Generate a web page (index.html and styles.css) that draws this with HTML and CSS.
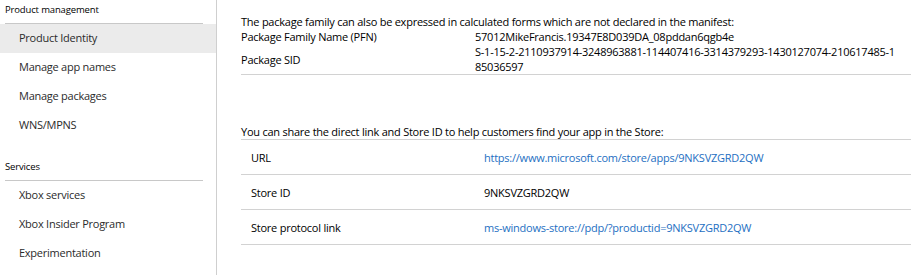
FILE: index.html
```html
<!DOCTYPE html>
<html lang="en">
<head>
    <meta charset="UTF-8">
    <title>Product identity</title>
    <link rel="stylesheet" href="styles.css">
</head>
<body>
    <nav class="sidebar">
        <div class="nav-group">
            <div class="nav-title">Product management</div>
            <a class="nav-item active" href="#">Product Identity</a>
            <a class="nav-item" href="#">Manage app names</a>
            <a class="nav-item" href="#">Manage packages</a>
            <a class="nav-item" href="#">WNS/MPNS</a>
        </div>
        <div class="nav-group">
            <div class="nav-title">Services</div>
            <a class="nav-item" href="#">Xbox services</a>
            <a class="nav-item" href="#">Xbox Insider Program</a>
            <a class="nav-item" href="#">Experimentation</a>
        </div>
    </nav>

    <main class="content">
        <section class="forms">
            <p class="intro">The package family can also be expressed in calculated forms which are not declared in the manifest:</p>
            <div class="kv">
                <div class="kv-label">Package Family Name (PFN)</div>
                <div class="kv-value">57012MikeFrancis.19347E8D039DA_08pddan6qgb4e</div>
            </div>
            <div class="kv">
                <div class="kv-label">Package SID</div>
                <div class="kv-value sid">S-1-15-2-2110937914-3248963881-114407416-3314379293-1430127074-210617485-1<br>85036597</div>
            </div>
        </section>

        <section class="links">
            <p class="intro">You can share the direct link and Store ID to help customers find your app in the Store:</p>
            <div class="row">
                <div class="row-label">URL</div>
                <div class="row-value"><a href="#">https://www.microsoft.com/store/apps/9NKSVZGRD2QW</a></div>
            </div>
            <div class="row">
                <div class="row-label">Store ID</div>
                <div class="row-value">9NKSVZGRD2QW</div>
            </div>
            <div class="row">
                <div class="row-label">Store protocol link</div>
                <div class="row-value"><a href="#">ms-windows-store://pdp/?productid=9NKSVZGRD2QW</a></div>
            </div>
        </section>
    </main>
</body>
</html>
```

FILE: styles.css
```css
* { margin: 0; padding: 0; box-sizing: border-box; }
body {
    font-family: "Open Sans", "Noto Sans", sans-serif;
    color: #000; background: white;
    display: flex; min-height: 100vh;
}

/* left navigation */
.sidebar { width: 217px; flex-shrink: 0; border-right: 1px solid #cfcfcf; }
.nav-group + .nav-group { margin-top: 17px; }
.nav-title {
    height: 24px; margin: 0 13px 0 5px; padding-top: 3px;
    font-size: 9.5px; line-height: 14px; letter-spacing: -0.15px; color: #000;
    border-bottom: 1px solid #c8c8c8;
}
.nav-item {
    display: block; height: 29px; line-height: 28px; padding-left: 19px;
    font-size: 11px; letter-spacing: -0.25px; color: #2b2b2b; text-decoration: none;
}
.nav-item.active { background: #ebebeb; }

/* main */
.content {
    flex: 1; padding: 14px 12px 0 24px;
    font-size: 11px; line-height: 15px; letter-spacing: -0.24px;
}
.content section { width: 670px; }
.forms { border-bottom: 1px solid #d2d2d2; }
.kv { display: flex; align-items: center; }
.kv-label { width: 234px; flex-shrink: 0; }
.kv-value { flex: 1; }
.sid { white-space: nowrap; }

.links { margin-top: 49px; }
.links .intro { border-bottom: 1px solid #d2d2d2; }
.row { display: flex; align-items: center; height: 35px; border-bottom: 1px solid #d2d2d2; }
.row-label { width: 234px; flex-shrink: 0; padding-left: 10px; }
.row-value { flex: 1; padding-left: 9px; }
.row-value a { color: #1e6fc2; text-decoration: none; }
```
